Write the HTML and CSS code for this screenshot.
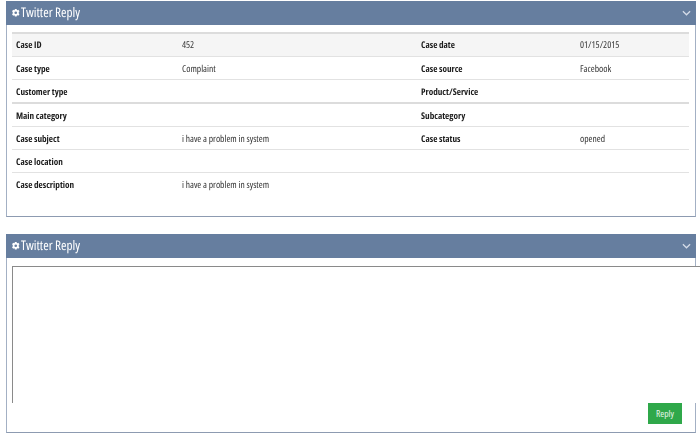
FILE: index.html
```html
<!DOCTYPE html>
<html lang="en">
<head>
<meta charset="utf-8">
<title>Twitter Reply</title>
<link rel="stylesheet" href="styles.css">
</head>
<body>
<section class="panel panel-details">
  <header class="panel-head">
    <h2 class="panel-title">
      <svg class="gear" viewBox="0 0 10 10" aria-hidden="true"><path fill-rule="evenodd" d="M3.800 0h2.400l.3 1.400.7.3L8.400 1 10 3.100l-1 1v1.800l1 1L8.400 9l-1.200-.7-.7.3L6.200 10H3.800l-.3-1.400-.7-.3-1.200.7L0 6.900l1-1V4.100l-1-1L1.600 1l1.200.7.700-.3zM5 3.200a1.800 1.800 0 1 0 0 3.600 1.800 1.800 0 0 0 0-3.600z"/></svg>
      <span class="title-text">Twitter Reply</span>
    </h2>
    <svg class="chevron" viewBox="0 0 10 6" aria-hidden="true"><path d="M1 1l4 4 4-4"/></svg>
  </header>
  <div class="panel-body">
    <table class="case-table">
      <tbody>
        <tr class="row-first"><th class="c1">Case ID</th><td class="c2">452</td><th class="c3">Case date</th><td>01/15/2015</td></tr>
        <tr><th>Case type</th><td>Complaint</td><th>Case source</th><td>Facebook</td></tr>
        <tr class="row-thick"><th>Customer type</th><td></td><th>Product/Service</th><td></td></tr>
        <tr><th>Main category</th><td></td><th>Subcategory</th><td></td></tr>
        <tr><th>Case subject</th><td>i have a problem in system</td><th>Case status</th><td>opened</td></tr>
        <tr><th>Case location</th><td></td><th></th><td></td></tr>
        <tr class="row-last"><th>Case description</th><td>i have a problem in system</td><th></th><td></td></tr>
      </tbody>
    </table>
  </div>
</section>
<section class="panel panel-reply">
  <header class="panel-head">
    <h2 class="panel-title">
      <svg class="gear" viewBox="0 0 10 10" aria-hidden="true"><path fill-rule="evenodd" d="M3.800 0h2.400l.3 1.400.7.3L8.400 1 10 3.100l-1 1v1.800l1 1L8.400 9l-1.200-.7-.7.3L6.200 10H3.800l-.3-1.400-.7-.3-1.200.7L0 6.900l1-1V4.100l-1-1L1.600 1l1.200.7.700-.3zM5 3.200a1.800 1.800 0 1 0 0 3.600 1.800 1.800 0 0 0 0-3.600z"/></svg>
      <span class="title-text">Twitter Reply</span>
    </h2>
    <svg class="chevron" viewBox="0 0 10 6" aria-hidden="true"><path d="M1 1l4 4 4-4"/></svg>
  </header>
  <div class="reply-body">
    <textarea class="reply-input"></textarea>
    <div class="reply-actions"><button class="reply-btn" type="button">Reply</button></div>
  </div>
</section>
</body>
</html>
```
FILE: styles.css
```css
html, body {
  margin: 0;
  padding: 0;
  height: 440px;
  overflow: hidden;
  background: #fff;
}
body {
  width: 700px;
  padding: 1px 4px 0 6px;
  box-sizing: border-box;
  font-family: "Open Sans", "Noto Sans", sans-serif;
  font-stretch: 75%;
  text-rendering: geometricPrecision;
  color: #222;
}
.panel {
  box-sizing: border-box;
  border: 1px solid #a3b0c4;
  border-top: 0;
  border-bottom-color: #8d9bb1;
}
.panel-details { height: 216px; margin-bottom: 17px; }
.panel-reply { height: 199px; }
.panel-head {
  height: 24px;
  margin: 0 -1px;
  padding: 0 5px 0 6px;
  background: #667e9f;
  display: flex;
  align-items: center;
  justify-content: space-between;
  color: #fff;
}
.panel-title {
  margin: 0;
  display: flex;
  align-items: center;
  gap: 1.500px;
  font-size: 13.200px;
  font-weight: 400;
  will-change: opacity;
}
.title-text { line-height: 22px; padding-bottom: 2px; }
.gear { width: 7.500px; height: 7.500px; fill: #fff; }
.chevron {
  width: 9px;
  height: 6px;
  fill: none;
  stroke: #d5dce8;
  stroke-width: 1.400;
}
.panel-body { padding: 7px 6px 0 5px; }
.case-table {
  width: 100%;
  border-collapse: collapse;
  table-layout: fixed;
  border-top: 2px solid #dcdcdc;
  font-size: 9.200px;
  will-change: opacity;
}
.case-table th, .case-table td {
  height: 22px;
  padding: 0 4px;
  text-align: left;
  vertical-align: middle;
  border-bottom: 1px solid #e2e2e2;
  overflow: hidden;
  white-space: nowrap;
}
.case-table th { font-weight: 700; color: #1c1c1c; }
.case-table td { font-weight: 400; font-size: 9.500px; color: #333; }
.c1 { width: 158px; }
.c2 { width: 231px; }
.c3 { width: 151px; }
.case-table .row-first th, .case-table .row-first td { background: rgba(0, 0, 0, .04); height: 21px; padding-bottom: 1px; }
.row-thick th, .row-thick td { border-bottom: 2px solid #dcdcdc; }
.case-table .row-last th, .case-table .row-last td { border-bottom: 0; height: 21px; padding-top: 1px; }
.reply-body { padding-top: 8px; }
.reply-input {
  display: block;
  box-sizing: border-box;
  width: 700px;
  height: 137px;
  margin: 0 0 0 5px;
  padding: 0;
  border: 1px solid #8a8a8a;
  border-bottom: 0;
  border-right: 0;
  background: #fff;
  resize: none;
  outline: 0;
}
.reply-actions {
  display: flex;
  justify-content: flex-end;
  padding-right: 13px;
}
.reply-btn {
  width: 34px;
  height: 21px;
  padding: 0;
  border: 0;
  background: #2fa84a;
  color: #e8f5ea;
  font-family: inherit;
  font-stretch: inherit;
  font-size: 9.500px;
}
```
